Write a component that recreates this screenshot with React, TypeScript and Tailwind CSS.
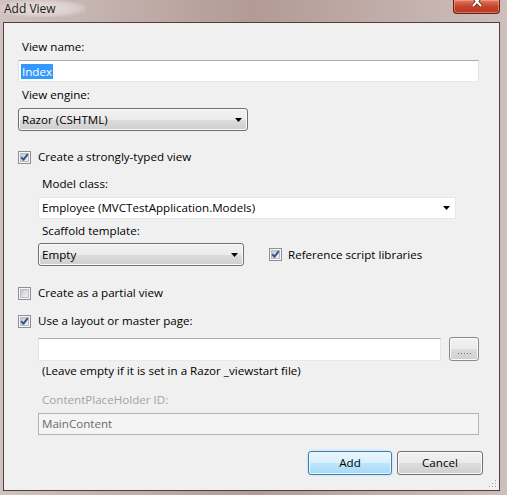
import React from "react";

const Check = ({ checked }: { checked: boolean }) => (
  <svg width="13" height="13" viewBox="0 0 13 13" className="shrink-0 block">
    <defs>
      <linearGradient id="cbgrad" x1="0" y1="0" x2="1" y2="1">
        <stop offset="0" stopColor="#bfc4cb" />
        <stop offset="1" stopColor="#f6f6f6" />
      </linearGradient>
    </defs>
    <rect x="0.5" y="0.5" width="12" height="12" fill="#f7f7f7" stroke="#8e8f8f" />
    <rect x="2.5" y="2.5" width="8" height="8" fill="url(#cbgrad)" stroke="#b8bcc4" />
    {checked && (
      <path d="M3.3 6.2 L5.4 8.8 L9.7 3.2" fill="none" stroke="#3b4f8c" strokeWidth="1.9" strokeLinejoin="round" />
    )}
  </svg>
);

const Arrow = () => (
  <svg width="7" height="4" viewBox="0 0 7 4" className="block shrink-0">
    <path d="M0 0 H7 L3.5 4 Z" fill="#000" />
  </svg>
);

export default function App() {
  return (
    <div className="w-[507px] h-[495px] flex flex-col overflow-hidden bg-linear-to-r from-[#cfc2bf] via-[#b39a95] to-[#cdbfbb] font-['Open_Sans',sans-serif] text-[11.6px] leading-[16px] text-[#000]">
      {/* Title bar */}
      <div className="h-[22px] shrink-0 flex items-start justify-between">
        <div className="pl-[4px] pt-[1px] pr-[30px] text-[12px] leading-[16px] text-[#1a1a1a] bg-[radial-gradient(ellipse_at_center,rgba(235,228,226,0.9)_0%,rgba(235,228,226,0.5)_55%,rgba(235,228,226,0)_80%)]">
          Add View
        </div>
        <div className="mr-[7px] w-[47px] h-[14px] rounded-b-[4px] border border-t-0 border-[#5e2319] bg-linear-to-b from-[#e07b62] via-[#c9412a] to-[#b83a24] flex items-start justify-center shadow-[inset_0_0_0_1px_rgba(255,190,170,0.45)]">
          <svg width="14" height="8" viewBox="0 0 14 8" className="block">
            <path d="M3 -3 L11 6 M11 -3 L3 6" stroke="#5a2a20" strokeWidth="3.6" />
            <path d="M3 -3 L11 6 M11 -3 L3 6" stroke="#ffffff" strokeWidth="2" />
          </svg>
        </div>
      </div>

      {/* Client area */}
      <div className="relative flex-1 ml-[3px] mr-[7px] mb-[4px] border border-[#4e3f3d] bg-[#f0f0f0] flex flex-col pl-[14px] pr-[20px] pt-[16px]">
        <div className="pl-[4px]">View name:</div>
        <div className="mt-[5px] h-[22px] border border-[#e2e3ea] border-t-[#abadb3] border-b-[#e3e9ef] bg-white flex items-center pl-[2px]">
          <span className="bg-[#3399ff] text-white px-[1px] leading-[15px]">Index</span>
        </div>

        <div className="mt-[5px] pl-[4px]">View engine:</div>
        <div className="mt-[5px] w-[230px] h-[23px] rounded-[3px] border border-[#707070] bg-[linear-gradient(#f2f2f2,#ebebeb_50%,#dddddd_50%,#cfcfcf)] shadow-[inset_0_0_0_1px_#fbfbfb] flex items-center justify-between pl-[3px] pr-[5px]">
          <span>Razor (CSHTML)</span>
          <Arrow />
        </div>

        <label className="mt-[18px] flex items-center gap-[7px]">
          <Check checked />
          <span>Create a strongly-typed view</span>
        </label>

        <div className="pl-[20px] flex flex-col">
          <div className="mt-[11px] pl-[4px]">Model class:</div>
          <div className="mt-[5px] w-[418px] h-[22px] border border-[#e4e6ea] bg-white flex items-center justify-between pl-[3px] pr-[5px]">
            <span>Employee (MVCTestApplication.Models)</span>
            <Arrow />
          </div>

          <div className="mt-[4px] pl-[4px]">Scaffold template:</div>
          <div className="mt-[4px] flex items-center">
            <div className="w-[206px] h-[23px] rounded-[3px] border border-[#707070] bg-[linear-gradient(#f2f2f2,#ebebeb_50%,#dddddd_50%,#cfcfcf)] shadow-[inset_0_0_0_1px_#fbfbfb] flex items-center justify-between pl-[3px] pr-[5px]">
              <span>Empty</span>
              <Arrow />
            </div>
            <label className="ml-[25px] flex items-center gap-[6px]">
              <Check checked />
              <span>Reference script libraries</span>
            </label>
          </div>
        </div>

        <label className="mt-[19px] flex items-center gap-[7px]">
          <Check checked={false} />
          <span>Create as a partial view</span>
        </label>

        <label className="mt-[12px] flex items-center gap-[7px]">
          <Check checked />
          <span>Use a layout or master page:</span>
        </label>

        <div className="pl-[20px] flex flex-col">
          <div className="mt-[8px] flex items-start gap-[8px]">
            <div className="mt-[1px] w-[403px] h-[23px] border border-[#e2e3ea] border-t-[#abadb3] border-b-[#e3e9ef] bg-white" />
            <div className="w-[30px] h-[24px] rounded-[3px] border border-[#8a8a8a] bg-[linear-gradient(#f2f2f2,#ebebeb_50%,#dddddd_50%,#cfcfcf)] shadow-[inset_0_0_0_1px_#fbfbfb] flex items-end justify-center pb-[6px] gap-[2px]">
              <span className="block w-[1px] h-[1px] bg-[#6f6f6f]" />
              <span className="block w-[1px] h-[1px] bg-[#6f6f6f]" />
              <span className="block w-[1px] h-[1px] bg-[#6f6f6f]" />
              <span className="block w-[1px] h-[1px] bg-[#6f6f6f]" />
              <span className="block w-[1px] h-[1px] bg-[#6f6f6f]" />
            </div>
          </div>
          <div className="mt-[2px] pl-[4px]">(Leave empty if it is set in a Razor _viewstart file)</div>

          <div className="mt-[13px] pl-[4px] text-[#a3a3a3]">ContentPlaceHolder ID:</div>
          <div className="mt-[5px] h-[22px] border border-[#afb4b8] bg-[#f4f4f4] flex items-center pl-[3px] text-[#6a6a6a]">
            MainContent
          </div>
        </div>

        <div className="mt-[16px] mr-[-4px] flex justify-end gap-[5px]">
          <div className="w-[84px] h-[24px] rounded-[3px] border border-[#3c7fb1] bg-[linear-gradient(#eaf6fd,#d9f0fc_50%,#bee6fd_50%,#a7d9f5)] shadow-[inset_0_0_0_1px_#e8f6fd,0_0_2px_#8fd3f5] flex items-center justify-center">
            Add
          </div>
          <div className="w-[86px] h-[24px] rounded-[3px] border border-[#707070] bg-[linear-gradient(#f2f2f2,#ebebeb_50%,#dddddd_50%,#cfcfcf)] shadow-[inset_0_0_0_1px_#fbfbfb] flex items-center justify-center">
            Cancel
          </div>
        </div>

        {/* resize grip */}
        <svg width="10" height="10" viewBox="0 0 10 10" className="absolute right-[1px] bottom-[1px]">
          {[
            [7, 1], [4, 4], [7, 4], [1, 7], [4, 7], [7, 7],
          ].map(([x, y], i) => (
            <g key={i}>
              <rect x={x + 1} y={y + 1} width="1" height="1" fill="#ffffff" />
              <rect x={x} y={y} width="1" height="1" fill="#a0a0a0" />
            </g>
          ))}
        </svg>
      </div>
    </div>
  );
}
